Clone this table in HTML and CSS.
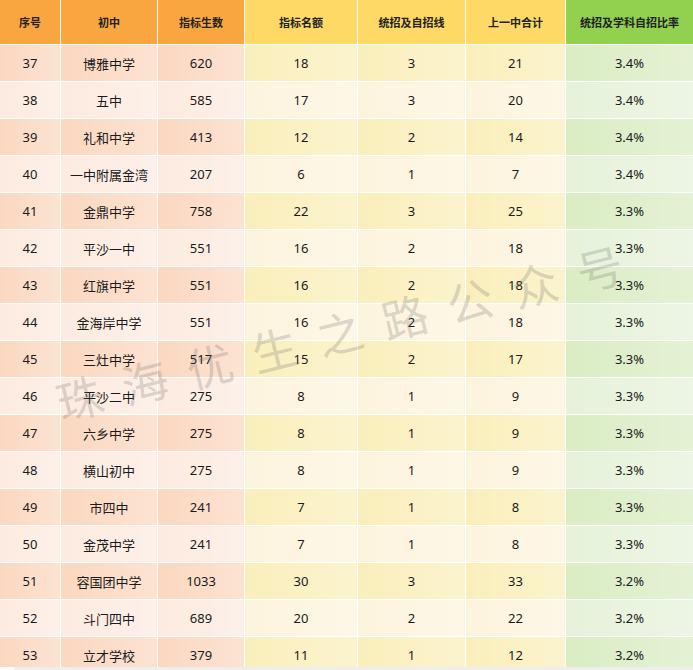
FILE: index.html
```html
<!DOCTYPE html>
<html lang="zh">
<head>
<meta charset="utf-8">
<title>指标生数统计</title>
<link rel="stylesheet" href="styles.css">
</head>
<body>
<div class="frame">
  <div class="sheet">
    <div class="row head">
      <div class="c o">序号</div>
      <div class="c o">初中</div>
      <div class="c o">指标生数</div>
      <div class="c y">指标名额</div>
      <div class="c y">统招及自招线</div>
      <div class="c y">上一中合计</div>
      <div class="c g">统招及学科自招比率</div>
    </div>
    <div class="row odd"><div class="c o">37</div><div class="c o">博雅中学</div><div class="c o">620</div><div class="c y">18</div><div class="c y">3</div><div class="c y">21</div><div class="c g">3.4%</div></div>
    <div class="row even"><div class="c o">38</div><div class="c o">五中</div><div class="c o">585</div><div class="c y">17</div><div class="c y">3</div><div class="c y">20</div><div class="c g">3.4%</div></div>
    <div class="row odd"><div class="c o">39</div><div class="c o">礼和中学</div><div class="c o">413</div><div class="c y">12</div><div class="c y">2</div><div class="c y">14</div><div class="c g">3.4%</div></div>
    <div class="row even"><div class="c o">40</div><div class="c o">一中附属金湾</div><div class="c o">207</div><div class="c y">6</div><div class="c y">1</div><div class="c y">7</div><div class="c g">3.4%</div></div>
    <div class="row odd"><div class="c o">41</div><div class="c o">金鼎中学</div><div class="c o">758</div><div class="c y">22</div><div class="c y">3</div><div class="c y">25</div><div class="c g">3.3%</div></div>
    <div class="row even"><div class="c o">42</div><div class="c o">平沙一中</div><div class="c o">551</div><div class="c y">16</div><div class="c y">2</div><div class="c y">18</div><div class="c g">3.3%</div></div>
    <div class="row odd"><div class="c o">43</div><div class="c o">红旗中学</div><div class="c o">551</div><div class="c y">16</div><div class="c y">2</div><div class="c y">18</div><div class="c g">3.3%</div></div>
    <div class="row even"><div class="c o">44</div><div class="c o">金海岸中学</div><div class="c o">551</div><div class="c y">16</div><div class="c y">2</div><div class="c y">18</div><div class="c g">3.3%</div></div>
    <div class="row odd"><div class="c o">45</div><div class="c o">三灶中学</div><div class="c o">517</div><div class="c y">15</div><div class="c y">2</div><div class="c y">17</div><div class="c g">3.3%</div></div>
    <div class="row even"><div class="c o">46</div><div class="c o">平沙二中</div><div class="c o">275</div><div class="c y">8</div><div class="c y">1</div><div class="c y">9</div><div class="c g">3.3%</div></div>
    <div class="row odd"><div class="c o">47</div><div class="c o">六乡中学</div><div class="c o">275</div><div class="c y">8</div><div class="c y">1</div><div class="c y">9</div><div class="c g">3.3%</div></div>
    <div class="row even"><div class="c o">48</div><div class="c o">横山初中</div><div class="c o">275</div><div class="c y">8</div><div class="c y">1</div><div class="c y">9</div><div class="c g">3.3%</div></div>
    <div class="row odd"><div class="c o">49</div><div class="c o">市四中</div><div class="c o">241</div><div class="c y">7</div><div class="c y">1</div><div class="c y">8</div><div class="c g">3.3%</div></div>
    <div class="row even"><div class="c o">50</div><div class="c o">金茂中学</div><div class="c o">241</div><div class="c y">7</div><div class="c y">1</div><div class="c y">8</div><div class="c g">3.3%</div></div>
    <div class="row odd"><div class="c o">51</div><div class="c o">容国团中学</div><div class="c o">1033</div><div class="c y">30</div><div class="c y">3</div><div class="c y">33</div><div class="c g">3.2%</div></div>
    <div class="row even"><div class="c o">52</div><div class="c o">斗门四中</div><div class="c o">689</div><div class="c y">20</div><div class="c y">2</div><div class="c y">22</div><div class="c g">3.2%</div></div>
    <div class="row odd"><div class="c o">53</div><div class="c o">立才学校</div><div class="c o">379</div><div class="c y">11</div><div class="c y">1</div><div class="c y">12</div><div class="c g">3.2%</div></div>
  </div>
  <div class="watermark">珠海优生之路公众号</div>
</div>
<div class="footer"></div>
</body>
</html>
```

FILE: styles.css
```css
html, body {
  margin: 0;
  padding: 0;
  background: #ffffff;
}
body {
  width: 693px;
  font-family: "Noto Sans", "Noto Sans CJK SC", sans-serif;
  color: #1b1b1b;
}
.frame {
  position: relative;
  height: 667px;
  overflow: hidden;
}
.sheet {
  display: flex;
  flex-direction: column;
  gap: 1px;
  background: #ffffff;
}
.row {
  display: grid;
  grid-template-columns: 60px 96px 86px 112px 107px 99px 127px;
  column-gap: 1px;
  height: 36px;
}
.row.head {
  height: 44px;
}
.c {
  display: flex;
  align-items: center;
  justify-content: center;
  font-size: 13px;
  white-space: nowrap;
  background-image: linear-gradient(to right, rgba(255,255,255,0), rgba(255,255,255,0.28));
}
.head .c {
  font-size: 11px;
  font-weight: bold;
  color: #222;
  background-image: none;
}
.head .o { background-color: #f9a640; }
.head .y { background-color: #fed966; }
.head .g { background-color: #92d050; }
.odd .o { background-color: #fbd8c0; }
.odd .y { background-color: #faefbb; }
.odd .g { background-color: #daedc3; }
.even .o { background-color: #fdebe0; }
.even .y { background-color: #fdf4de; }
.even .g { background-color: #e6f2da; }
.watermark {
  position: absolute;
  left: 48px;
  top: 302px;
  width: 603px;
  line-height: 54px;
  font-family: "Noto Sans CJK SC", sans-serif;
  font-size: 46px;
  letter-spacing: 21px;
  color: rgba(100, 100, 100, 0.24);
  white-space: nowrap;
  transform: rotate(-14deg);
  pointer-events: none;
}
.footer {
  height: 3px;
  margin-left: 14px;
  background: #eeeeee;
}
```
